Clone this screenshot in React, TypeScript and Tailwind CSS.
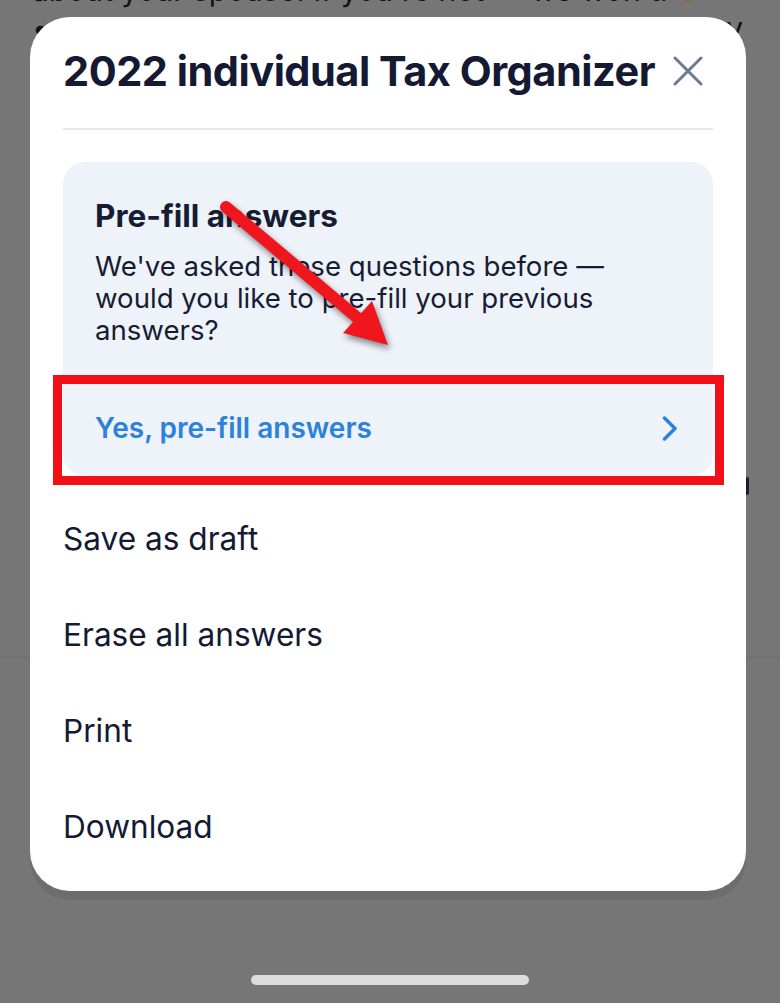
import React from "react";

function CloseIcon() {
  return (
    <svg width="30" height="30" viewBox="0 0 30 30" className="shrink-0">
      <path d="M2 2 L28 28 M28 2 L2 28" stroke="#6b7a99" strokeWidth="3" strokeLinecap="round" fill="none" />
    </svg>
  );
}

function Chevron() {
  return (
    <svg width="16" height="25" viewBox="0 0 16 25" className="shrink-0">
      <path d="M2.5 2 L13 12.5 L2.5 23" stroke="#2b82da" strokeWidth="3.5" strokeLinecap="round" strokeLinejoin="round" fill="none" />
    </svg>
  );
}

export default function App() {
  const items = ["Save as draft", "Erase all answers", "Print", "Download"];
  return (
    <div className="relative h-[1003px] w-[780px] overflow-hidden bg-[#767676] font-['Inter',sans-serif]">
      {/* dimmed page behind the sheet */}
      <div className="h-[684px] border-b border-[#6d6d6d] pl-[32px] pr-[37px] text-[30px] leading-[32px] text-[#121212]">
        <p className="-mt-[26px] flex items-center gap-[8px] whitespace-nowrap">
          about your spouse. If you're not — we won't.
          <span className="inline-block h-[22px] w-[22px] rounded-full bg-[#a06a10]" />
        </p>
        <div className="mt-[6px] flex justify-between">
          <span>•</span>
          <span>y</span>
        </div>
      </div>
      <div className="absolute left-[745px] top-[477px] h-[18px] w-[4px] rounded-sm bg-[#1a1d2a]" />

      {/* sheet */}
      <div className="absolute left-[30px] top-[17px] flex h-[874px] w-[716px] flex-col rounded-[40px] bg-white px-[33px] pt-[30px] shadow-[0_9px_0_0_rgba(0,0,0,0.07)]">
        <div className="flex items-center gap-[18px]">
          <h1 className="whitespace-nowrap text-[41.5px] font-bold leading-[48px] tracking-[-0.012em] text-[#141a33]">
            2022 individual Tax Organizer
          </h1>
          <CloseIcon />
        </div>
        <div className="mt-[33px] h-[2px] bg-[#e3e7f2]" />
        <div className="mt-[32px] overflow-hidden rounded-[22px] bg-[#eef2f9]">
          <div className="px-[32px] pb-[34px] pt-[36px] text-[#161c33]">
            <h2 className="text-[31.5px] font-bold leading-[36px]">Pre-fill answers</h2>
            <p className="mt-[16px] text-[27.6px] leading-[32px]">
              We've asked these questions before —
              <br />
              would you like to pre-fill your previous
              <br />
              answers?
            </p>
          </div>
          <button className="flex h-[96px] w-full items-center justify-between pl-[32px] pr-[35px] text-left text-[28px] font-semibold text-[#2b82da]">
            <span>Yes, pre-fill answers</span>
            <Chevron />
          </button>
        </div>
        <ul className="mt-[15px]">
          {items.map((t) => (
            <li key={t} className="flex h-[96px] items-center text-[31.6px] text-[#141a33]">
              {t}
            </li>
          ))}
        </ul>
      </div>

      {/* annotation: red box */}
      <div className="pointer-events-none absolute left-[53px] top-[375px] h-[110px] w-[671px] border-[9px] border-[#f20f18]" />

      {/* annotation: red arrow */}
      <svg
        className="pointer-events-none absolute left-0 top-0"
        width="780"
        height="1003"
        viewBox="0 0 780 1003"
        style={{ filter: "drop-shadow(2px 4px 3px rgba(0,0,0,0.45))" }}
      >
        <line x1="226" y1="207" x2="360" y2="320" stroke="#ef161d" strokeWidth="12" strokeLinecap="round" />
        <polygon points="343,333 372,301 388,345" fill="#ef161d" />
      </svg>

      {/* home indicator */}
      <div className="absolute left-[251px] top-[975px] h-[10px] w-[278px] rounded-full bg-[#dcdcdc]" />
    </div>
  );
}
